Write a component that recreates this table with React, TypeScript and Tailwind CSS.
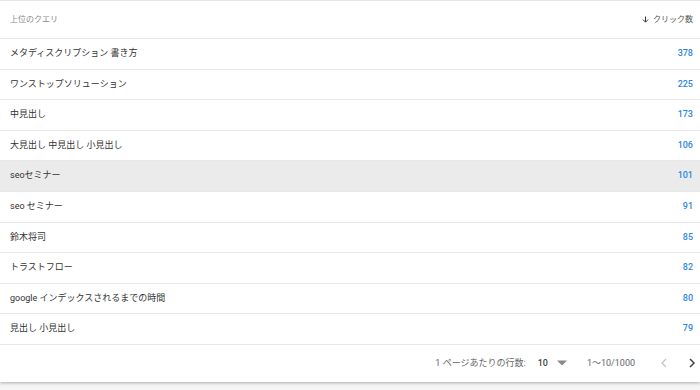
import React from 'react';

type QueryRow = { query: string; clicks: number; highlighted?: boolean };

const rows: QueryRow[] = [
  { query: 'メタディスクリプション 書き方', clicks: 378 },
  { query: 'ワンストップソリューション', clicks: 225 },
  { query: '中見出し', clicks: 173 },
  { query: '大見出し 中見出し 小見出し', clicks: 106 },
  { query: 'seoセミナー', clicks: 101, highlighted: true },
  { query: 'seo セミナー', clicks: 91 },
  { query: '鈴木将司', clicks: 85 },
  { query: 'トラストフロー', clicks: 82 },
  { query: 'google インデックスされるまでの時間', clicks: 80 },
  { query: '見出し 小見出し', clicks: 79 },
];

const font = { fontFamily: '"Roboto", "Noto Sans CJK JP", sans-serif' };

const App: React.FC = () => {
  return (
    <div className="w-[700px] h-[390px] bg-[#f5f5f5] overflow-hidden" style={font}>
      <div className="bg-white border-t border-[#e6e6e6] shadow-[0_1px_3px_rgba(0,0,0,0.3)]">
        <div className="h-[38px] flex items-center justify-between pl-[10px] pr-[7px] border-b border-[#e8e8e8]">
          <span className="text-[8px] text-[#8a8a8a]">上位のクエリ</span>
          <span className="flex items-center gap-[3px] text-[8px] text-[#555]">
            <svg width="9" height="9" viewBox="0 0 24 24" className="text-[#333]">
              <path d="M12 4v15M5 12l7 7 7-7" fill="none" stroke="currentColor" strokeWidth="2.6" />
            </svg>
            クリック数
          </span>
        </div>
        {rows.map((r) => (
          <div
            key={r.query}
            className={`h-[30.6px] flex items-center justify-between pl-[10px] pr-[7px] border-b border-[#e8e8e8] ${
              r.highlighted ? 'bg-[#ebebeb]' : 'bg-white'
            }`}
          >
            <span className="text-[9px] text-[#333]">{r.query}</span>
            <span className="text-[9px] font-medium text-[#2e86de]">{r.clicks}</span>
          </div>
        ))}
        <div className="h-[37px] flex items-center justify-end text-[9px] text-[#666] pr-[4px]">
          <span>1 ページあたりの行数:</span>
          <span className="ml-[12px] font-medium text-[#444]">10</span>
          <svg width="10" height="6" viewBox="0 0 10 5" className="ml-[9px]">
            <path d="M0 0h10L5 5z" fill="#8a8a8a" />
          </svg>
          <span className="ml-[20px]">1〜10/1000</span>
          <svg width="8" height="10" viewBox="0 0 8 10" className="ml-[25px]">
            <path d="M6 1L2 5l4 4" fill="none" stroke="#c4c4c4" strokeWidth="1.3" />
          </svg>
          <svg width="8" height="10" viewBox="0 0 8 10" className="ml-[20px]">
            <path d="M2 1l4 4-4 4" fill="none" stroke="#444" strokeWidth="1.5" />
          </svg>
        </div>
      </div>
    </div>
  );
};

export default App;
